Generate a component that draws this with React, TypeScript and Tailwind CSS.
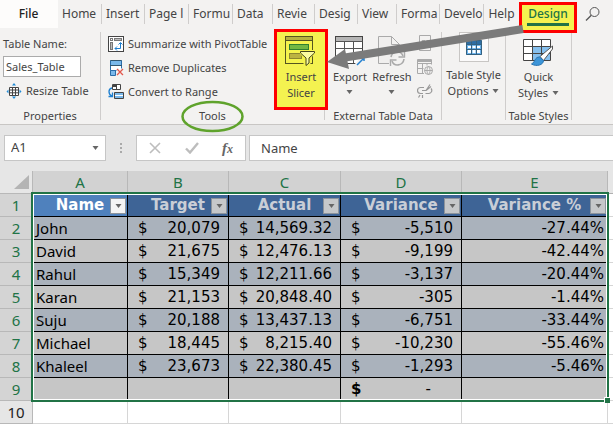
import type { ReactNode } from "react";

const tabs: { label: string; width: string }[] = [
  { label: "Home", width: "w-[44px]" },
  { label: "Insert", width: "w-[43px]" },
  { label: "Page l", width: "w-[44px]" },
  { label: "Formu", width: "w-[44px]" },
  { label: "Data", width: "w-[40px]" },
  { label: "Revie", width: "w-[42px]" },
  { label: "Desig", width: "w-[43px]" },
  { label: "View", width: "w-[39px]" },
  { label: "Forma", width: "w-[43px]" },
  { label: "Develo", width: "w-[44px]" },
];

const headers = ["Name", "Target", "Actual", "Variance", "Variance %"];

const rows: string[][] = [
  ["John", "20,079", "14,569.32", "-5,510", "-27.44%"],
  ["David", "21,675", "12,476.13", "-9,199", "-42.44%"],
  ["Rahul", "15,349", "12,211.66", "-3,137", "-20.44%"],
  ["Karan", "21,153", "20,848.40", "-305", "-1.44%"],
  ["Suju", "20,188", "13,437.13", "-6,751", "-33.44%"],
  ["Michael", "18,445", "8,215.40", "-10,230", "-55.46%"],
  ["Khaleel", "23,673", "22,380.45", "-1,293", "-5.46%"],
];

function Caret({ className = "" }: { className?: string }) {
  return (
    <svg width="7" height="4" viewBox="0 0 7 4" className={`shrink-0 ${className}`} aria-hidden="true">
      <path d="M0.5 0h6L3.5 4z" fill="#666" />
    </svg>
  );
}

function Group({ label, width, children }: { label: string; width: string; children: ReactNode }) {
  return (
    <section className={`flex h-[88px] shrink-0 flex-col border-r border-[#cfcdcc] ${width}`}>
      <div className="h-20">{children}</div>
      <div className="h-2 text-center leading-2 whitespace-nowrap">{label}</div>
    </section>
  );
}

function PivotIcon() {
  return (
    <svg className="shrink-0" width="16" height="16" viewBox="0 0 16 16" fill="none" aria-hidden="true">
      <rect x="0.5" y="0.5" width="15" height="15" fill="#fff" stroke="#444" />
      <rect x="2.5" y="2.5" width="2" height="2" stroke="#777" />
      <rect x="6.5" y="2.5" width="7" height="2" fill="#bbb" stroke="#777" />
      <rect x="2.5" y="6.5" width="2" height="7" fill="#bbb" stroke="#777" />
      <path d="M7 12.500h5.500V7M9 10.500l-2 2 2 2M10.500 8.500l2-2 2 2" stroke="#1e7fd0" />
    </svg>
  );
}

function DuplicatesIcon() {
  return (
    <svg className="shrink-0" width="16" height="16" viewBox="0 0 16 16" fill="none" aria-hidden="true">
      <path d="M2.500 0.500h11v10h-11z" fill="#fff" stroke="#2b6ca8" />
      <path d="M3 1h10v4H3z" fill="#7ab8ea" />
      <path d="M2.500 10.500h5v5h-5z" fill="#7ab8ea" stroke="#2b6ca8" />
      <path d="M2 5.500h12M2.500 0.500h11" stroke="#33566f" />
      <path d="M9 9l6 6M15 9l-6 6" stroke="#f3f2f1" strokeWidth="3" />
      <path d="M9 9l6 6M15 9l-6 6" stroke="#e2574c" strokeWidth="1.300" />
    </svg>
  );
}

function RangeIcon() {
  return (
    <svg className="shrink-0" width="16" height="16" viewBox="0 0 16 16" fill="none" aria-hidden="true">
      <path d="M4.500 0.500h8v5h-8zM8.500 0.500v5" fill="#fff" stroke="#444" />
      <path d="M5 1h3v2H5z" fill="#444" />
      <path d="M6.500 8.500h9v6h-9z" fill="#7ab8ea" stroke="#444" />
      <path d="M7 11.500h8" stroke="#fff" />
      <path d="M4 4C0 5 0 10 4 12M4.500 8.500v4h-4" stroke="#1e7fd0" strokeWidth="1.300" />
    </svg>
  );
}

function ResizeIcon() {
  return (
    <svg className="shrink-0" width="16" height="16" viewBox="0 0 16 16" fill="none" aria-hidden="true">
      <path d="M3.500 4.500h9v8h-9zM3.500 7h9M6.500 4.500v8M9.500 4.500v8M3.500 9.800h9" fill="#fff" stroke="#444" />
      <path d="M8 0l2 2.500H6zM8 16l2-2.500H6zM0.500 8.500l2-2v4zM15.500 8.500l-2-2v4z" fill="#1e8ad6" />
    </svg>
  );
}

function SlicerIcon() {
  return (
    <svg width="32" height="30" viewBox="0 0 32 30" fill="none" aria-hidden="true">
      <rect x="0.5" y="0.5" width="27" height="27" fill="#f5f34d" stroke="#55551f" />
      <rect x="1" y="1" width="26" height="3" fill="#b5b23f" />
      <path d="M0 4.500h28" stroke="#55551f" />
      <rect x="4.500" y="8.500" width="19" height="5" fill="#72b842" stroke="#2f8030" />
      <rect x="4.500" y="17.500" width="12" height="5" fill="#bcb341" stroke="#8d8630" />
      <path d="M15.500 15.500h14l-5.500 6.500v5l-4 2.500V22z" fill="#f7f78a" stroke="#f5f34d" strokeWidth="3" />
      <path d="M15.500 15.500h14v1.500L24 22v5l-3 2.500V22l-5.500-5z" fill="#fbfba0" stroke="#44441c" />
    </svg>
  );
}

function ExportIcon() {
  return (
    <svg width="30" height="30" viewBox="0 0 30 30" fill="none" aria-hidden="true">
      <rect x="0.5" y="0.5" width="27" height="27" fill="#fff" stroke="#444" />
      <rect x="1" y="1" width="26" height="4" fill="#b5b5b5" />
      <path d="M0.500 5.500h27M0.500 12.500h27M0.500 20.500h27M9.500 5v22M18.500 5v22" stroke="#555" />
      <path d="M18 30l11-12v12z" fill="#f3f2f1" />
      <path d="M22 29l6-6M27 22h2v3" stroke="#2480cf" strokeWidth="1.500" />
    </svg>
  );
}

function RefreshIcon() {
  return (
    <svg width="28" height="30" viewBox="0 0 28 30" fill="none" stroke="#aaa" aria-hidden="true">
      <path d="M11 27.500H0.500v-27h13l8 8v6M13.500 0.500v8h8" fill="#f0efee" />
      <path d="M13 21c1-6 10-7 12-1M26 23c-1 7-10 8-12 2" strokeWidth="1.600" />
      <path d="M26.500 15v6h-6M12.500 30v-6h6" strokeWidth="1.400" />
    </svg>
  );
}

function SmallIcons() {
  return (
    <div className="flex flex-col gap-2 pt-[3px]" aria-hidden="true">
      <svg width="16" height="16" viewBox="0 0 16 16" fill="none" stroke="#aaa">
        <path d="M2.500 0.500h11v15h-11zM5 5.500h3v3H5zM9.500 5.500H12M9.500 8.500H12M5 12.500h7" />
      </svg>
      <svg width="16" height="16" viewBox="0 0 16 16" fill="none" stroke="#aaa">
        <path d="M7 14.500H0.500v-14h14v5M0.500 4.500h14M5.500 4.500v10M10 4.500v2M0.500 9.500h6" />
        <path d="M0.500 2h14" strokeWidth="2" />
        <circle cx="11.500" cy="11.500" r="4" fill="#f3f2f1" />
        <path d="M7.500 11.500h8M11.500 7.500c-2 2-2 6 0 8M11.500 7.500c2 2 2 6 0 8" />
      </svg>
      <svg width="16" height="16" viewBox="0 0 16 16" fill="none" stroke="#999" strokeWidth="1.200">
        <path d="M7 4.500H3.500a3 3 0 0 0 0 6H6M8.500 10.500h3.500a3 3 0 0 0 2-5M5 7.500h4l4-6M9 7.500l5-4M3 12l-1.500 2.500M5.500 12v3" />
      </svg>
    </div>
  );
}

function OptionsIcon() {
  return (
    <svg width="16" height="15" viewBox="0 0 16 15" fill="none" aria-hidden="true">
      <path d="M0 0h16v15H0z" fill="#6db3ec" />
      <path d="M1 1h14v3H1z" fill="#2d6da3" />
      <path d="M2 6h3v2H2zM6.500 6h3v2h-3zM11 6h3v2h-3zM2 10h3v3H2zM6.500 10h3v3h-3zM11 10h3v3h-3z" fill="#fff" />
      <path d="M0.500 0.500h15v14H0.500zM0.500 4.500h15M0.500 9.500h15M5.500 0v15M10.500 0v15" stroke="#35617f" />
    </svg>
  );
}

function BrushIcon() {
  return (
    <svg width="31" height="28" viewBox="0 0 31 28" fill="none" aria-hidden="true">
      <path d="M0.500 0.500h27v21h-27z" fill="#fff" />
      <path d="M10 8h17v13H10z" fill="#86c0ee" />
      <path d="M0.500 0.500h27v21h-27zM0.500 7.500h27M0.500 14.500h27M9.500 0.500v21M18.500 0.500v21" stroke="#444" />
      <path d="M29.500 7L17 17.500l3.500 4L29.500 10z" fill="#fff" stroke="#555" />
      <path d="M16.500 18c-5 0-4 5-8 7 5 3 12 1 12-3.500z" fill="#3d95d8" stroke="#2774b2" />
    </svg>
  );
}

function Money({ value }: { value: string }) {
  return (
    <div className="flex justify-between pr-2 pl-[10px]">
      <span>$</span>
      <span>{value}</span>
    </div>
  );
}

function Ribbon() {
  return (
    <div className="flex h-[97px] overflow-hidden border-b border-[#c8c6c4] pt-1 text-[11px] leading-4">
      <Group label="Properties" width="w-[101px]">
        <div className="flex flex-col items-start gap-1 pt-1 pl-[3px] whitespace-nowrap">
          <label htmlFor="table-name">Table Name:</label>
          <input
            id="table-name"
            defaultValue="Sales_Table"
            className="h-[21px] w-[78px] border border-[#ababab] bg-white px-0.5 outline-none"
          />
          <button type="button" className="flex items-center gap-1 pt-0.5 pl-[3px]">
            <ResizeIcon />
            Resize Table
          </button>
        </div>
      </Group>
      <Group label="Tools" width="w-[224px]">
        <div className="flex w-[173px] flex-col gap-2 pt-1 pl-[7px] whitespace-nowrap">
          <button type="button" className="flex items-center gap-1"><PivotIcon />Summarize with PivotTable</button>
          <button type="button" className="flex items-center gap-1"><DuplicatesIcon />Remove Duplicates</button>
          <button type="button" className="flex items-center gap-1"><RangeIcon />Convert to Range</button>
        </div>
      </Group>
      <Group label="External Table Data" width="w-[117px]">
        <div className="flex justify-between px-2">
          <button type="button" className="flex flex-col items-center pt-1">
            <ExportIcon />
            <span className="pt-[3px]">Export</span>
            <Caret className="mt-[5px]" />
          </button>
          <button type="button" className="flex flex-col items-center pt-1">
            <RefreshIcon />
            <span className="pt-[3px]">Refresh</span>
            <Caret className="mt-[5px]" />
          </button>
          <SmallIcons />
        </div>
      </Group>
      <Group label="" width="w-[64px]">
        <button type="button" className="flex w-full flex-col items-center">
          <span className="flex h-[30px] w-[30px] items-center justify-center border border-[#c8c6c4] bg-[#fbfafa]">
            <OptionsIcon />
          </span>
          <span className="pt-[5px] whitespace-nowrap">Table Style</span>
          <span className="flex items-center gap-1">Options <Caret /></span>
        </button>
      </Group>
      <Group label="Table Styles" width="w-[66px]">
        <button type="button" className="flex w-full flex-col items-center pt-[7px]">
          <BrushIcon />
          <span className="pt-0.5">Quick</span>
          <span className="flex items-center gap-1">Styles <Caret /></span>
        </button>
      </Group>
    </div>
  );
}

function FormulaBar() {
  return (
    <div className="flex h-[46px] items-start gap-[3px] bg-[#e6e6e6] pt-[10px] pl-1 text-[13px] text-[#444]">
      <div className="flex h-[26px] w-[102px] items-center border border-[#c6c6c6] bg-white px-1.5">
        <input aria-label="Name Box" defaultValue="A1" className="w-0 flex-1 outline-none" />
        <button type="button" aria-label="Open name list"><Caret /></button>
      </div>
      <svg width="24" height="26" viewBox="0 0 24 26" fill="#aaa" aria-hidden="true">
        <path d="M11 8h2v2h-2zM11 12h2v2h-2zM11 16h2v2h-2z" />
      </svg>
      <div className="flex h-[26px] w-[110px] items-center justify-between border border-[#c6c6c6] bg-white px-3">
        <button type="button" aria-label="Cancel">
          <svg width="12" height="12" viewBox="0 0 12 12" stroke="#bdbdbd" strokeWidth="1.600"><path d="M1 1l10 10M11 1L1 11" /></svg>
        </button>
        <button type="button" aria-label="Enter">
          <svg width="14" height="12" viewBox="0 0 14 12" fill="none" stroke="#bdbdbd" strokeWidth="2.400"><path d="M1 6.500l4 4L13 1" /></svg>
        </button>
        <button type="button" aria-label="Insert function" className="font-['Liberation_Serif',serif] text-[15px] leading-4 font-bold text-[#666] italic">
          f<span className="text-[12px]">x</span>
        </button>
      </div>
      <input
        aria-label="Formula"
        defaultValue="Name"
        className="h-[26px] min-w-0 flex-1 border border-r-0 border-[#c6c6c6] bg-white pl-[11px] outline-none"
      />
    </div>
  );
}

function RowHeader({ n, active = true }: { n: number; active?: boolean }) {
  return (
    <th
      scope="row"
      className={`h-[23px] border-r border-b border-[#b8b8b8] p-0 text-center font-normal ${
        active ? "bg-[#d4d4d4] text-[#217346]" : "bg-[#e6e6e6] text-[#222]"
      }`}
    >
      {n}
    </th>
  );
}

const box = "h-[23px] border-r border-b border-black p-0";
const cell = `${box} font-['DejaVu_Sans',sans-serif]`;
const blank = "h-[23px] border-b border-[#d6d6d6] bg-white p-0";

function Sheet() {
  return (
    <div className="relative">
      <table className="w-full table-fixed border-separate border-spacing-0 text-[15px] leading-5 text-black">
        <colgroup>
          <col className="w-[33px]" />
          <col className="w-[95px]" />
          <col className="w-[101px]" />
          <col className="w-[112px]" />
          <col className="w-[121px]" />
          <col className="w-[146px]" />
          <col />
        </colgroup>
        <thead>
          <tr>
            <td className="h-[23px] border-r border-b border-[#b8b8b8] bg-[#e6e6e6] p-0">
              <svg width="15" height="15" viewBox="0 0 15 15" className="mr-[3px] ml-auto" aria-hidden="true">
                <path d="M15 0v14H0z" fill="#b4b4b4" />
              </svg>
            </td>
            {["A", "B", "C", "D", "E"].map((c) => (
              <th key={c} scope="col" className="h-[23px] border-r border-b border-[#b8b8b8] bg-[#d2d2d2] p-0 font-normal text-[#217346]">
                {c}
              </th>
            ))}
            <td className="h-[23px] border-b border-[#b0b0b0] bg-[#e6e6e6] p-0" />
          </tr>
        </thead>
        <tbody>
          <tr>
            <RowHeader n={1} />
            {headers.map((h, i) => (
              <td
                key={h}
                className={`${cell} relative text-center font-bold ${
                  i === 0 ? "bg-[#4f81bd] text-white" : "bg-[#3e6496] text-[#c9ced6]"
                }`}
              >
                {h}
                <button
                  type="button"
                  aria-label={`Filter ${h}`}
                  className={`absolute right-px bottom-0.5 flex h-4 w-4 items-center justify-center border border-[#8d949c] ${
                    i === 0 ? "bg-[#f4f4f4]" : "bg-[#c6c8ca]"
                  }`}
                >
                  <Caret />
                </button>
              </td>
            ))}
            <td className={blank} />
          </tr>
          {rows.map((r, i) => {
            const bg = i % 2 === 0 ? "bg-[#aab2bc]" : "bg-[#c6c6c6]";
            return (
              <tr key={r[0]}>
                <RowHeader n={i + 2} />
                <td className={`${box} ${bg}`}>
                  <div className="pl-[3px]">{r[0]}</div>
                </td>
                <td className={`${cell} ${bg}`}><Money value={r[1]} /></td>
                <td className={`${cell} ${bg}`}><Money value={r[2]} /></td>
                <td className={`${cell} ${bg}`}><Money value={r[3]} /></td>
                <td className={`${cell} ${bg}`}>
                  <div className="pr-[3px] text-right">{r[4]}</div>
                </td>
                <td className={blank} />
              </tr>
            );
          })}
          <tr>
            <RowHeader n={9} />
            <td className={`${cell} bg-[#c6c6c6]`} />
            <td className={`${cell} bg-[#c6c6c6]`} />
            <td className={`${cell} bg-[#c6c6c6]`} />
            <td className={`${cell} bg-[#c6c6c6]`}>
              <div className="flex justify-between pr-[30px] pl-[10px]">
                <span className="font-bold">$</span>
                <span>-</span>
              </div>
            </td>
            <td className={`${cell} bg-[#c6c6c6]`} />
            <td className={blank} />
          </tr>
          <tr>
            <RowHeader n={10} active={false} />
            {headers.map((h) => (
              <td key={h} className={`${blank} border-r`} />
            ))}
            <td className={blank} />
          </tr>
        </tbody>
      </table>
      <div className="pointer-events-none absolute top-[21px] left-[31px] h-[210px] w-[578px] border-2 border-[#217346]">
        <div className="h-full w-full border border-white" />
        <div className="absolute -right-[3px] -bottom-[3px] h-[6px] w-[6px] border-t border-l border-white bg-[#217346]" />
      </div>
    </div>
  );
}

export default function App() {
  return (
    <main className="relative min-h-screen overflow-hidden bg-[#f3f2f1] font-['Noto_Sans',sans-serif] text-[#444]">
      <nav className="flex h-7 items-center text-[12px] leading-5">
        <button type="button" className="h-7 w-[58px] shrink-0 bg-[#fdfcfb] pr-px font-medium text-[#222]">File</button>
        {tabs.map((t, i) => (
          <button key={i} type="button" className={`shrink-0 border-r border-[#cfcdcc] pl-1 text-left whitespace-nowrap ${t.width}`}>
            {t.label}
          </button>
        ))}
        <button type="button" className="w-[35px] shrink-0 text-center">Help</button>
        <div className="w-[58px] shrink-0" />
        <button type="button" aria-label="Search" className="ml-2 shrink-0">
          <svg width="16" height="16" viewBox="0 0 16 16" fill="none" stroke="#555" aria-hidden="true">
            <circle cx="9.500" cy="6" r="4.500" />
            <path d="M6.300 9.200L1 14.500" strokeWidth="1.300" />
          </svg>
        </button>
      </nav>
      <Ribbon />
      <FormulaBar />
      <Sheet />

      <button
        type="button"
        className="absolute top-[2px] left-[519px] flex h-[31px] w-[58px] flex-col items-center border-[3px] border-[#fe0000] bg-[#f4f250] text-[12px] leading-[18px] font-medium text-[#217346]"
      >
        Design
        <span className="h-[3px] w-[42px] bg-[#217346]" />
      </button>
      <button
        type="button"
        className="absolute top-[29px] left-[274px] flex h-[81px] w-[54px] flex-col items-center border-[3px] border-[#fe0000] bg-[#f4f250] pt-1 text-[11px] leading-4"
      >
        <SlicerIcon />
        <span className="pt-[3px]">Insert</span>
        <span>Slicer</span>
      </button>
      <svg width="400" height="134" viewBox="0 0 400 134" className="pointer-events-none absolute top-0 left-[180px]" fill="none" aria-hidden="true">
        <ellipse cx="32.500" cy="116.500" rx="30" ry="14.500" stroke="#5fa32c" strokeWidth="2.500" />
        <path d="M343 29L162 58" stroke="#7b7b7b" strokeWidth="8" />
        <path d="M147 62l18-13 4 20z" fill="#7b7b7b" />
      </svg>
    </main>
  );
}
